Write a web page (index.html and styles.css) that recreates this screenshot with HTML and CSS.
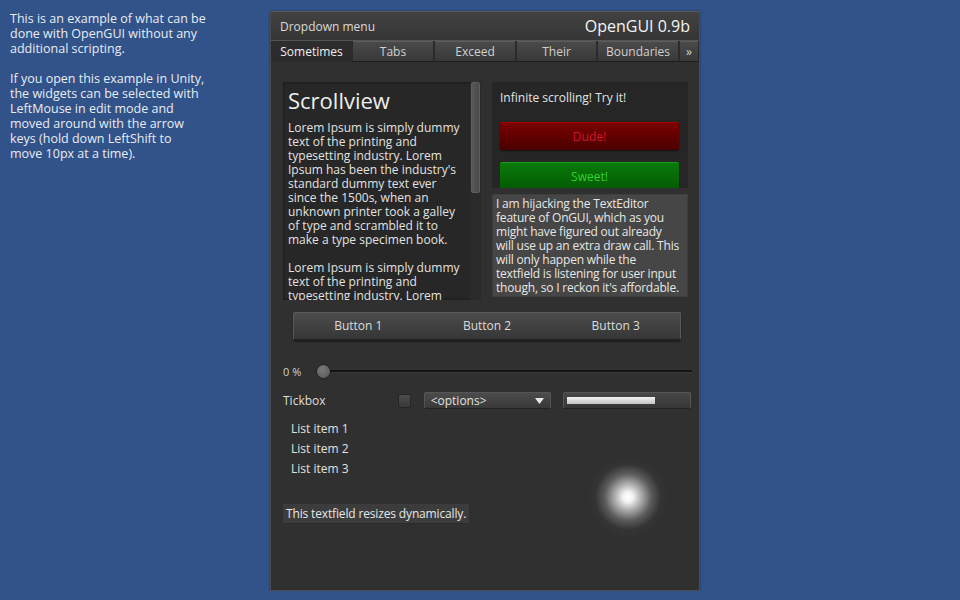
FILE: index.html
```html
<!DOCTYPE html>
<html lang="en">

<head>
	<meta charset="UTF-8">
	<title>OpenGUI example</title>
	<link rel="stylesheet" href="styles.css">
</head>

<body>
	<div class="page">
		<div class="intro">
			<p>This is an example of what can be done with OpenGUI without any additional scripting.</p>
			<p>If you open this example in Unity, the widgets can be selected with LeftMouse in edit mode and moved around with the arrow keys (hold down LeftShift to move&nbsp;10px at a time).</p>
		</div>

		<div class="window">
			<div class="win-head">
				<span class="menu">Dropdown menu</span>
				<span class="brand">OpenGUI 0.9b</span>
			</div>
			<div class="tabs">
				<span class="tab active">Sometimes</span>
				<span class="tab">Tabs</span>
				<span class="tab">Exceed</span>
				<span class="tab">Their</span>
				<span class="tab">Boundaries</span>
				<span class="tab more">»</span>
			</div>

			<div class="content">
				<div class="top-row">
					<div class="scrollview">
						<div class="scroll-text">
							<h1>Scrollview</h1>
							<p>Lorem Ipsum is simply dummy text of the printing and typesetting industry. Lorem Ipsum has been the industry's standard dummy text ever since the 1500s, when an unknown printer took a galley of type and scrambled it to make a type specimen book.</p>
							<p>Lorem Ipsum is simply dummy text of the printing and typesetting industry. Lorem</p>
						</div>
						<div class="scrollbar"><div class="thumb"></div></div>
					</div>
					<div class="side">
						<div class="infinite">
							<p>Infinite scrolling! Try it!</p>
							<div class="btn-red">Dude!</div>
							<div class="btn-green">Sweet!</div>
						</div>
						<div class="textarea">I am hijacking the TextEditor feature of OnGUI, which as you might have figured out already will&nbsp;use&nbsp;up an extra draw call. This will only happen while the textfield&nbsp;is&nbsp;listening for user input though, so I reckon it's affordable.</div>
					</div>
				</div>

				<div class="btn-group">
					<span>Button 1</span>
					<span>Button 2</span>
					<span>Button 3</span>
				</div>

				<div class="slider-row">
					<span class="pct">0 %</span>
					<div class="track"><div class="knob"></div></div>
				</div>

				<div class="tick-row">
					<span class="tick-label">Tickbox</span>
					<span class="checkbox"></span>
					<div class="select">
						<span>&lt;options&gt;</span>
						<svg width="9" height="6" viewBox="0 0 9 6"><path d="M0 0h9L4.5 6z" fill="#e8e8e8"/></svg>
					</div>
					<div class="progress"><div class="bar" style="width: 88px"></div></div>
				</div>

				<ul class="list">
					<li>List item 1</li>
					<li>List item 2</li>
					<li>List item 3</li>
				</ul>

				<div class="textfield">This textfield resizes dynamically.</div>

				<div class="glow"></div>
			</div>
		</div>
	</div>
</body>

</html>
```

FILE: styles.css
```css
* {
	margin: 0;
	padding: 0;
	box-sizing: border-box;
}

body {
	background: #31538a;
	font-family: "Open Sans", "Noto Sans", sans-serif;
	font-size: 12px;
	color: #dcdcdc;
}

.page {
	display: flex;
	padding-top: 11px;
}

.intro {
	width: 210px;
	padding: 0 0 0 10px;
	margin-right: 60px;
	color: #e8ecf2;
	font-size: 12.5px;
	line-height: 15px;
}

.intro p {
	margin-bottom: 15px;
}

.window {
	width: 430px;
	height: 580px;
	background: #303030;
	border: 1px solid #4b4b4b;
	border-top-color: #5a5a5a;
	box-shadow: 0 0 2px rgba(0, 0, 0, 0.4);
}

.win-head {
	display: flex;
	justify-content: space-between;
	align-items: center;
	height: 29px;
	padding: 0 9px 0 9px;
	background: linear-gradient(#414141, #363636);
	border-bottom: 1px solid #555;
}

.menu {
	color: #dadada;
}

.brand {
	font-size: 16px;
	color: #f4f4f4;
}

.tabs {
	display: grid;
	grid-template-columns: 81px 82px 82px 81px 82px 1fr;
	height: 21px;
	border-bottom: 1px solid #222;
	background: #2c2c2c;
}

.tab {
	text-align: center;
	line-height: 19px;
	color: #d0d0d0;
	background: linear-gradient(#4a4a4a, #383838);
	border: 1px solid #2a2a2a;
	border-top-color: #5c5c5c;
	border-bottom-color: #1e1e1e;
	border-radius: 2px 2px 0 0;
}

.tab.active {
	background: linear-gradient(#2e2e2e, #2a2a2a);
	border-color: #2c2c2c;
	color: #f0f0f0;
}

.content {
	position: relative;
	padding: 20px 8px 0 12px;
}

.top-row {
	display: flex;
	gap: 11px;
	height: 218px;
}

.scrollview {
	display: flex;
	width: 198px;
	background: #272727;
	box-shadow: inset 0 0 3px rgba(0, 0, 0, 0.6);
	overflow: hidden;
}

.scroll-text {
	flex: 1;
	padding: 5px 4px 0 5px;
	line-height: 14px;
	color: #e2e2e2;
	overflow: hidden;
}

.scroll-text h1 {
	font-size: 22px;
	font-weight: normal;
	line-height: 26px;
	margin-bottom: 8px;
	color: #ededed;
}

.scroll-text p {
	margin-bottom: 14px;
}

.scrollbar {
	width: 11px;
	background: #2a2a2a;
}

.thumb {
	height: 111px;
	margin: 0 1px;
	background: linear-gradient(90deg, #575757, #4a4a4a);
	border: 1px solid #5f5f5f;
	border-radius: 2px;
}

.side {
	display: flex;
	flex-direction: column;
	gap: 6px;
	width: 196px;
}

.infinite {
	height: 106px;
	padding: 9px 9px 0 8px;
	background: #262626;
	overflow: hidden;
}

.infinite p {
	line-height: 14px;
	color: #e4e4e4;
	margin-bottom: 17px;
}

.btn-red,
.btn-green {
	height: 28px;
	line-height: 28px;
	text-align: center;
	border-radius: 2px;
}

.btn-red {
	color: #d3142a;
	background: linear-gradient(#7a0000, #4a0000);
	border-top: 1px solid #a00;
	box-shadow: 0 1px 2px #111;
}

.btn-green {
	margin-top: 12px;
	color: #2ed22e;
	background: linear-gradient(#0a7a0a, #045a04);
	border-top: 1px solid #1a9a1a;
}

.textarea {
	height: 103px;
	padding: 2px 3px;
	line-height: 14px;
	background: #464646;
	color: #e6e6e6;
	border: 1px solid #3e3e3e;
	letter-spacing: -0.2px;
	overflow: hidden;
}

.btn-group {
	display: grid;
	grid-template-columns: 1fr 1fr 1fr;
	height: 28px;
	margin: 12px 10px 0 10px;
	background: linear-gradient(#4c4c4c, #363636);
	border: 1px solid #5a5a5a;
	border-bottom-color: #222;
	border-radius: 2px;
	box-shadow: 0 2px 2px rgba(0, 0, 0, 0.4);
}

.btn-group span {
	text-align: center;
	line-height: 26px;
	color: #dcdcdc;
}

.slider-row {
	display: flex;
	align-items: center;
	height: 12px;
	margin-top: 25px;
}

.pct {
	width: 34px;
	font-size: 11px;
	color: #d0d0d0;
}

.track {
	position: relative;
	flex: 1;
	height: 3px;
	margin-right: -1px;
	background: #141414;
	border-bottom: 1px solid #3a3a3a;
}

.knob {
	position: absolute;
	left: 0;
	top: -5px;
	width: 13px;
	height: 13px;
	border-radius: 50%;
	background: radial-gradient(circle at 40% 35%, #7a7a7a, #555);
	box-shadow: 0 0 2px #111;
}

.tick-row {
	display: flex;
	align-items: center;
	height: 17px;
	margin-top: 15px;
}

.tick-label {
	width: 115px;
	color: #dcdcdc;
}

.checkbox {
	width: 13px;
	height: 14px;
	background: linear-gradient(#4c4c4c, #3a3a3a);
	border: 1px solid #262626;
	border-radius: 2px;
	margin-right: 13px;
}

.select {
	display: flex;
	justify-content: space-between;
	align-items: center;
	width: 128px;
	height: 17px;
	padding: 0 6px 0 6px;
	background: linear-gradient(#4c4c4c, #383838);
	border: 1px solid #555;
	border-bottom-color: #222;
	border-radius: 2px;
	margin-right: 12px;
	color: #e0e0e0;
}

.progress {
	width: 128px;
	height: 17px;
	padding: 4px 3px;
	background: linear-gradient(#474747, #363636);
	border: 1px solid #555;
	border-bottom-color: #222;
	border-radius: 2px;
}

.bar {
	height: 7px;
	background: linear-gradient(#f2f2f2, #c4c4c4);
}

.list {
	list-style: none;
	margin-top: 10px;
	padding-left: 8px;
}

.list li {
	line-height: 20px;
	color: #e0e0e0;
}

.textfield {
	display: inline-block;
	margin-top: 25px;
	height: 20px;
	line-height: 20px;
	padding: 0 3px;
	background: #3c3c3c;
	border-bottom: 1px solid #2a2a2a;
	color: #e6e6e6;
	letter-spacing: -0.15px;
}

.glow {
	position: absolute;
	left: 317px;
	top: 395px;
	width: 80px;
	height: 80px;
	border-radius: 50%;
	background: radial-gradient(circle closest-side, #ffffff 0, #f4f4f4 12%, rgba(220, 220, 220, 0.78) 30%, rgba(160, 160, 160, 0.4) 58%, rgba(80, 80, 80, 0.12) 82%, rgba(48, 48, 48, 0) 100%);
}
```
